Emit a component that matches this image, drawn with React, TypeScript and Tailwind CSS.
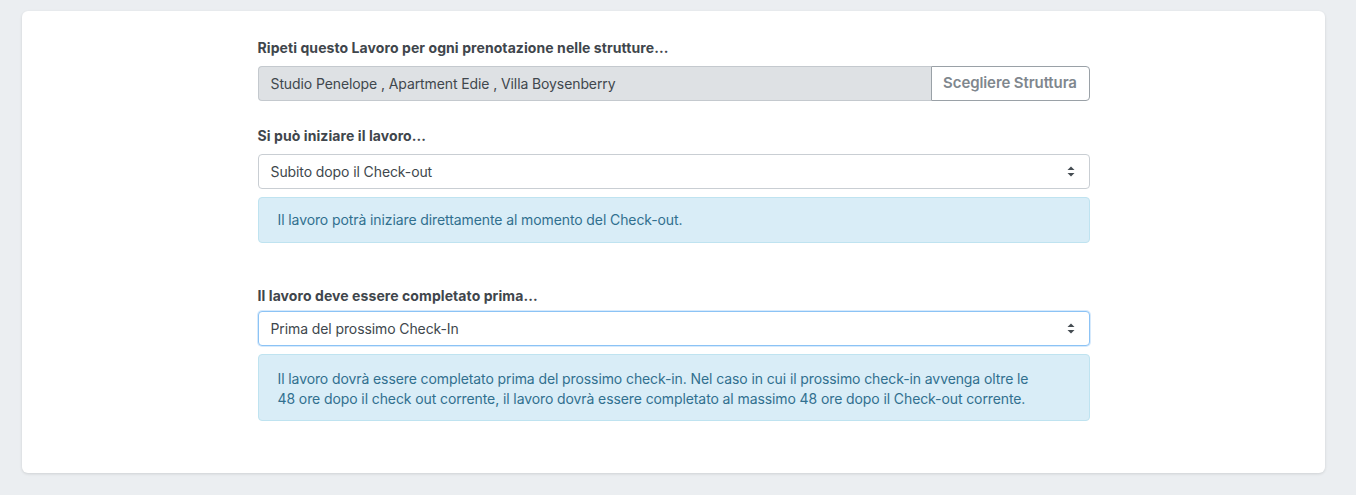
import React from 'react'

function Label({ children }: { children: React.ReactNode }) {
  return <div className="text-[14px] font-bold leading-5 tracking-[0.08px] text-[#3f464c]">{children}</div>
}

function SelectBox({ value, focused }: { value: string; focused?: boolean }) {
  return (
    <div
      className={
        'flex h-[35px] items-center justify-between rounded-[4px] border bg-white pl-[12px] pr-[14px] text-[14px] text-[#40474d] ' +
        (focused ? 'border-[#8cc3f5] shadow-[0_0_0_1px_rgba(140,195,245,0.35)]' : 'border-[#c9ced3]')
      }
    >
      <span>{value}</span>
      <svg width="8" height="11" viewBox="0 0 8 11" className="text-[#454c52]">
        <path d="M4 0.5 L7.5 4 H0.5 Z" fill="currentColor" />
        <path d="M4 10.5 L7.5 7 H0.5 Z" fill="currentColor" />
      </svg>
    </div>
  )
}

function Info({ children, tall }: { children: React.ReactNode; tall?: boolean }) {
  return (
    <div
      className={
        'rounded-[4px] border border-[#bfe3f0] bg-[#d9edf7] px-[19px] text-[14px] leading-5 text-[#31708f] ' +
        (tall ? 'pt-[14px] pb-[11px]' : 'py-[12px]')
      }
    >
      {children}
    </div>
  )
}

export default function App() {
  return (
    <div className="min-h-[495px] bg-[#ebeef1] pl-[22px] pr-[31px] pt-[11px] pb-[22px] font-['Inter',sans-serif] tracking-[-0.1px]">
      <div className="rounded-[6px] bg-white pt-[27px] pb-[52px] shadow-[0_1px_3px_rgba(0,0,0,0.12)]">
        <div className="mx-auto w-[832px]">
          <Label>Ripeti questo Lavoro per ogni prenotazione nelle strutture...</Label>
          <div className="mt-[8px] flex h-[35px]">
            <div className="flex flex-1 items-center rounded-l-[4px] border border-r-0 border-[#c4c9ce] bg-[#dee1e4] pl-[12px] text-[14px] text-[#40474d]">
              Studio Penelope , Apartment Edie , Villa Boysenberry
            </div>
            <div className="flex w-[159px] items-center justify-center rounded-r-[4px] border border-[#9aa1a7] bg-white text-[15px] font-semibold text-[#7f878e]">
              Scegliere Struttura
            </div>
          </div>

          <div className="mt-[25px]">
            <Label>Si può iniziare il lavoro...</Label>
          </div>
          <div className="mt-[8px]">
            <SelectBox value="Subito dopo il Check-out" />
          </div>
          <div className="mt-[8px]">
            <Info>Il lavoro potrà iniziare direttamente al momento del Check-out.</Info>
          </div>

          <div className="mt-[43px]">
            <Label>Il lavoro deve essere completato prima...</Label>
          </div>
          <div className="mt-[5px]">
            <SelectBox value="Prima del prossimo Check-In" focused />
          </div>
          <div className="mt-[8px]">
            <Info tall>
              Il lavoro dovrà essere completato prima del prossimo check-in. Nel caso in cui il prossimo check-in avvenga oltre le
              <br />
              48 ore dopo il check out corrente, il lavoro dovrà essere completato al massimo 48 ore dopo il Check-out corrente.
            </Info>
          </div>
        </div>
      </div>
    </div>
  )
}
